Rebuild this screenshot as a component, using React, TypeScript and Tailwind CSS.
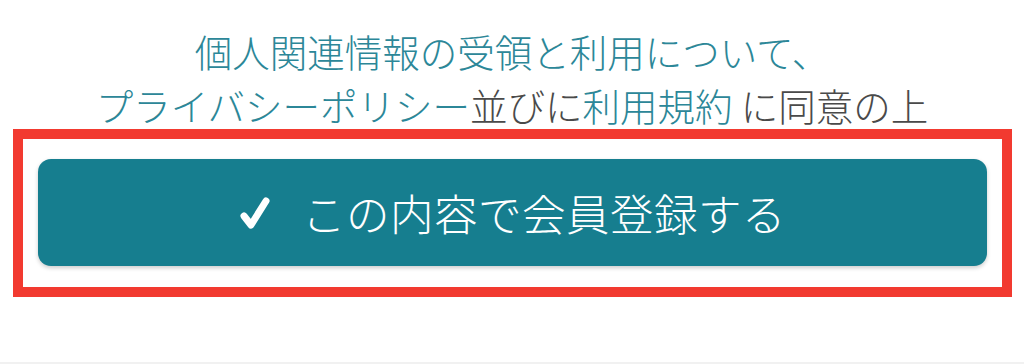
export default function App() {
  return (
    <div
      className="flex h-[364px] w-full flex-col bg-white"
      style={{ fontFamily: '"Noto Sans CJK JP", "Noto Sans", sans-serif' }}
    >
      {/* Consent text */}
      <div className="h-[129px] pt-[24px] text-center text-[37.5px] font-light leading-[54px] text-[#4a4a4a]">
        <p className="text-[#2c8798]">個人関連情報の受領と利用について、</p>
        <p>
          <span className="text-[#2c8798]">プライバシーポリシー</span>
          並びに
          <span className="text-[#2c8798]">利用規約</span> に同意の上
        </p>
      </div>

      {/* Highlighted submit area */}
      <div className="ml-[13px] mr-[12px] border-[10px] border-[#f23a30] px-[15px] pt-[20px] pb-[21px]">
        <button
          type="button"
          className="flex h-[107px] w-full items-center justify-center gap-[31px] rounded-[13px] bg-[#167e8f] text-white shadow-[0_2px_4px_rgba(0,0,0,0.2)]"
        >
          <svg width="32" height="34" viewBox="0 0 32 34" fill="none">
            <path
              d="M5 20 L12 29 L27 5"
              stroke="white"
              strokeWidth="7"
              strokeLinecap="round"
              strokeLinejoin="round"
            />
          </svg>
          <span className="text-[43.5px] font-light leading-none tracking-[0.5px]">
            この内容で会員登録する
          </span>
        </button>
      </div>

      <div className="flex-1" />
      <div className="h-[2px] bg-[#f1f1f1]" />
    </div>
  )
}
